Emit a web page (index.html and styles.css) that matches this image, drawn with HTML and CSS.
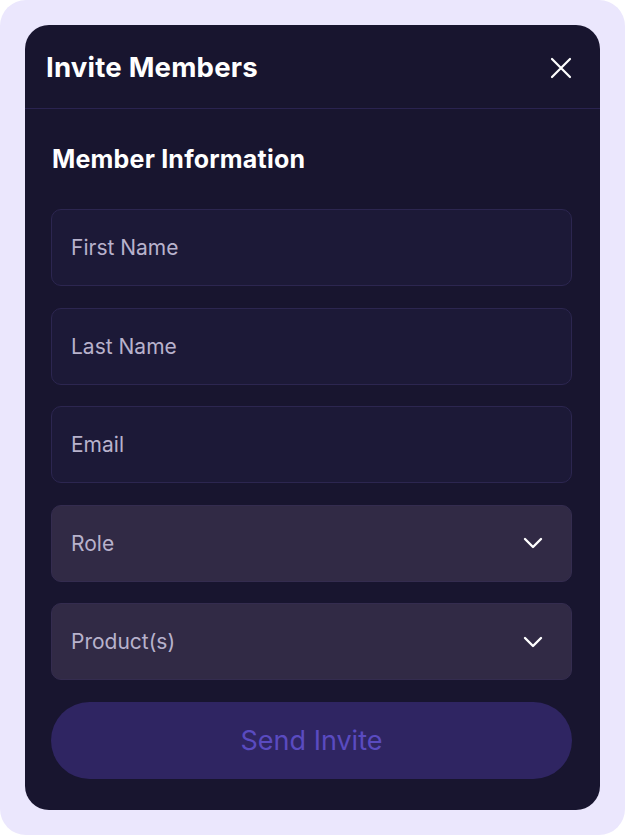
FILE: index.html
```html
<!DOCTYPE html>
<html lang="en">
<head>
<meta charset="utf-8">
<title>Invite Members</title>
<link rel="stylesheet" href="styles.css">
</head>
<body>
<div class="frame">
  <div class="modal">
    <div class="modal-header">
      <h1 class="modal-title">Invite Members</h1>
      <button class="close-btn" aria-label="Close">
        <svg width="22" height="22" viewBox="0 0 22 22" fill="none" stroke="#ffffff" stroke-width="2.2" stroke-linecap="round"><path d="M2 2L20 20M20 2L2 20"/></svg>
      </button>
    </div>
    <div class="modal-body">
      <h2 class="section-title">Member Information</h2>
      <div class="fields">
        <div class="field input">First Name</div>
        <div class="field input">Last Name</div>
        <div class="field input">Email</div>
        <div class="field select">Role
          <svg class="chev" width="20" height="12" viewBox="0 0 20 12" fill="none" stroke="#ffffff" stroke-width="2.4" stroke-linecap="round" stroke-linejoin="round"><path d="M2 2L10 10L18 2"/></svg>
        </div>
        <div class="field select">Product(s)
          <svg class="chev" width="20" height="12" viewBox="0 0 20 12" fill="none" stroke="#ffffff" stroke-width="2.4" stroke-linecap="round" stroke-linejoin="round"><path d="M2 2L10 10L18 2"/></svg>
        </div>
        <button class="send-btn">Send Invite</button>
      </div>
    </div>
  </div>
</div>
</body>
</html>
```
FILE: styles.css
```css
html, body {
  margin: 0;
  padding: 0;
  background: #ffffff;
}
body {
  font-family: Inter, "Liberation Sans", Arial, sans-serif;
}
.frame {
  width: 625px;
  height: 835px;
  box-sizing: border-box;
  padding: 25px;
  background: #ebe7fd;
  border-radius: 26px;
}
.modal {
  height: 785px;
  background: #18152f;
  border-radius: 24px;
  display: flex;
  flex-direction: column;
}
.modal-header {
  height: 84px;
  box-sizing: border-box;
  border-bottom: 1px solid #2a2350;
  display: flex;
  align-items: center;
  justify-content: space-between;
  padding: 0 28px 0 21px;
}
.modal-title {
  margin: 0;
  font-size: 27.6px;
  font-weight: 700;
  letter-spacing: 0.2px;
  color: #ffffff;
}
.close-btn {
  background: none;
  border: none;
  padding: 0;
  width: 22px;
  height: 22px;
  display: flex;
  margin-top: 2px;
}
.modal-body {
  padding: 35px 28px 0 26px;
}
.section-title {
  margin: 0 0 35px 1px;
  font-size: 25px;
  line-height: 30px;
  font-weight: 700;
  letter-spacing: 0.2px;
  color: #ffffff;
}
.fields {
  display: flex;
  flex-direction: column;
  gap: 21.6px;
}
.field {
  height: 77px;
  box-sizing: border-box;
  border-radius: 10px;
  display: flex;
  align-items: center;
  justify-content: space-between;
  padding: 0 28px 0 19px;
  font-size: 21px;
  color: #b8b2cc;
}
.input {
  background: #1c1937;
  border: 1px solid #2c2650;
}
.select {
  background: #312a45;
  border: 1px solid #342c4f;
}
.chev {
  display: block;
}
.send-btn {
  height: 77px;
  border: none;
  border-radius: 40px;
  background: #2f2562;
  color: #5a4bc0;
  font-family: Inter, "Liberation Sans", Arial, sans-serif;
  font-size: 27px;
  font-weight: 400;
}
```
